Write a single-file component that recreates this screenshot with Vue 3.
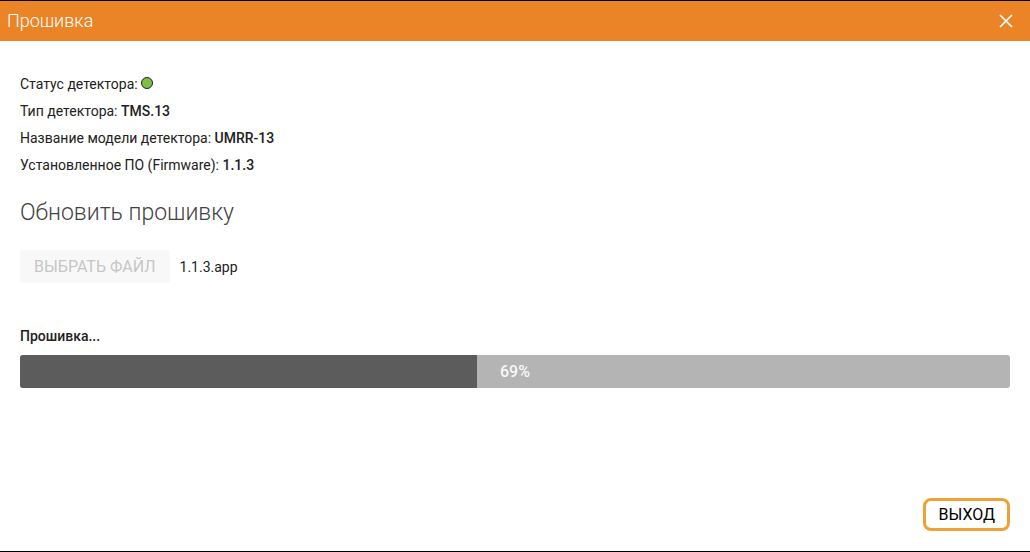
<template>
    <section class="firmware-dialog" aria-labelledby="dialog-title">
        <header class="dialog-header">
            <h1 id="dialog-title" class="dialog-title">Прошивка</h1>
            <button class="close-btn" type="button" aria-label="Закрыть">
                <svg width="14" height="14" viewBox="0 0 14 14" aria-hidden="true">
                    <path d="M1 1L13 13M13 1L1 13" fill="none" stroke="#fff" stroke-width="1.7" />
                </svg>
            </button>
        </header>

        <div class="dialog-body">
            <ul class="info">
                <li>Статус детектора: <span class="status" :class="{ online: isOnline }"></span></li>
                <li v-for="item in info" :key="item.label">
                    {{ item.label }}: <b>{{ item.value }}</b>
                </li>
            </ul>

            <h2 class="subtitle">Обновить прошивку</h2>

            <div class="file-row">
                <button class="file-btn" type="button" disabled>ВЫБРАТЬ ФАЙЛ</button>
                <span class="file-name">{{ fileName }}</span>
            </div>

            <div id="progress-label" class="progress-label">Прошивка...</div>
            <div
                class="progress"
                role="progressbar"
                aria-labelledby="progress-label"
                aria-valuemin="0"
                aria-valuemax="100"
                :aria-valuenow="percent"
            >
                <div class="progress-fill" :style="{ width: fillWidth + '%' }"></div>
                <span class="progress-text">{{ percent }}%</span>
            </div>
        </div>

        <footer class="dialog-footer">
            <button class="exit-btn" type="button">ВЫХОД</button>
        </footer>
    </section>
</template>

<script setup>
import { ref } from 'vue';

const isOnline = ref(true);
const fileName = ref('1.1.3.app');
const percent = ref(69);
const fillWidth = ref(46.16);

const info = [
    { label: 'Тип детектора', value: 'TMS.13' },
    { label: 'Название модели детектора', value: 'UMRR-13' },
    { label: 'Установленное ПО (Firmware)', value: '1.1.3' },
];
</script>

<style>
body {
    margin: 0;
    background: #fff;
}
</style>

<style scoped>
.firmware-dialog {
    box-sizing: border-box;
    display: flex;
    flex-direction: column;
    min-height: 100vh;
    border-top: 1px solid #000;
    border-bottom: 1px solid #000;
    color: #212121;
    font-family: Roboto, "Liberation Sans", sans-serif;
    font-size: 14px;
    line-height: 20px;
}

.dialog-header {
    display: flex;
    align-items: center;
    justify-content: space-between;
    height: 40px;
    padding: 0 17px 0 7px;
    background: #ea8427;
}

.dialog-title {
    margin: 0;
    color: #fff;
    font-size: 18px;
    font-weight: 300;
}

.close-btn {
    display: flex;
    padding: 0;
    border: 0;
    background: none;
}

.dialog-body {
    flex: 1;
    padding: 30px 20px 0;
}

.info {
    margin: 0;
    padding: 0;
    list-style: none;
    line-height: 27px;
}

.info b {
    font-weight: 500;
}

.status {
    display: inline-block;
    box-sizing: border-box;
    width: 12px;
    height: 12px;
    border: 1px solid #212121;
    border-radius: 50%;
    background: #bbb;
}

.status.online {
    background: #7ac143;
}

.subtitle {
    margin: 19px 0 22px;
    color: #424242;
    font-size: 23px;
    font-weight: 300;
    line-height: 30px;
}

.file-row {
    display: flex;
    align-items: center;
    gap: 10px;
}

.file-btn {
    height: 33px;
    padding: 0 14px;
    border: 0;
    border-radius: 3px;
    background: #f8f8f8;
    color: #c6c6c6;
    font-family: inherit;
    font-size: 16px;
}

.progress-label {
    margin: 43px 0 9px;
    font-weight: 500;
}

.progress {
    position: relative;
    height: 33px;
    border-radius: 3px;
    background: #b4b4b4;
    overflow: hidden;
}

.progress-fill {
    height: 100%;
    background: #5c5c5c;
}

.progress-text {
    position: absolute;
    inset: 0;
    color: #f8f8f8;
    font-size: 16px;
    font-weight: 500;
    line-height: 33px;
    text-align: center;
}

.dialog-footer {
    display: flex;
    justify-content: flex-end;
    padding: 20px;
}

.exit-btn {
    height: 33px;
    padding: 0 12px;
    border: 3px solid #eda137;
    border-radius: 8px;
    background: #fff;
    color: #000;
    font-family: inherit;
    font-size: 16px;
}
</style>
